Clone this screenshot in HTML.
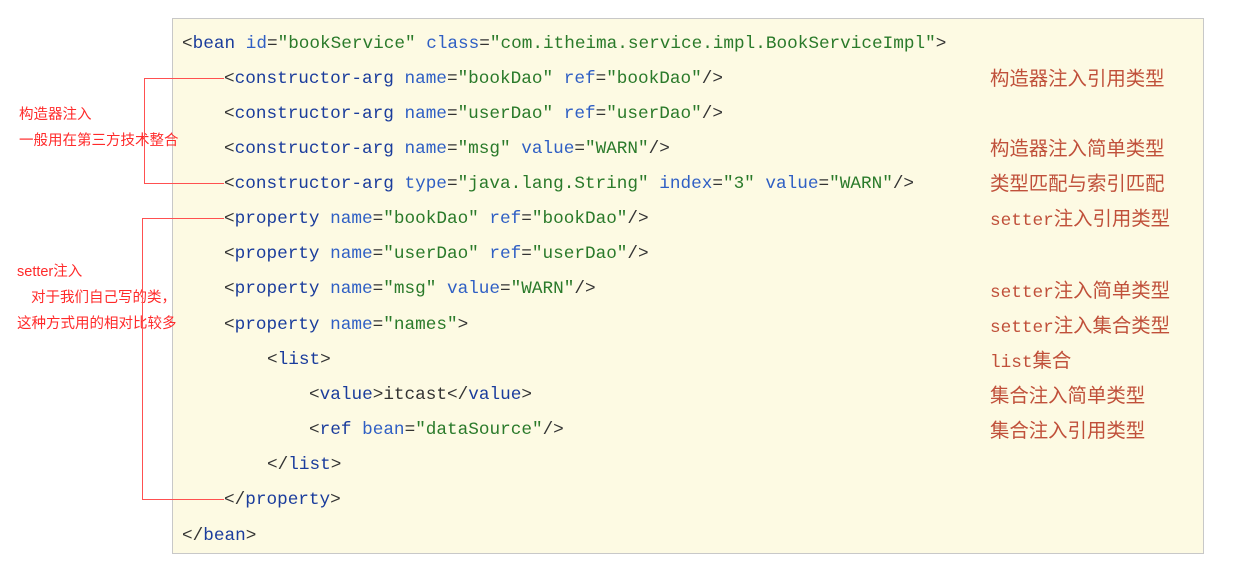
<!DOCTYPE html>
<html><head><meta charset="utf-8"><style>
body{margin:0;width:1242px;height:568px;background:#fff;position:relative;overflow:hidden;font-family:"Liberation Sans","Noto Sans CJK SC",sans-serif}
#box{position:absolute;left:172px;top:18px;width:1030px;height:534px;background:#fdfae3;border:1px solid #c8c8c8}
.c{position:absolute;font-family:"Liberation Mono",monospace;font-size:17.7px;white-space:pre;color:#333;line-height:20px}
.t{color:#1a3c9c}.a{color:#2f5fc4}.s{color:#2a7a2a}
.r{position:absolute;left:990px;font-size:19.4px;color:#c0503a;font-family:"Liberation Mono","Noto Sans CJK SC",monospace;line-height:20px;white-space:nowrap}
.r span{font-size:17.7px}
.l{position:absolute;font-size:14.5px;color:#ff2a2a;white-space:nowrap;line-height:16px}
.ln{position:absolute;background:#ff5050}
</style></head><body>
<div id="box"></div>
<div class="c" style="left:182px;top:34px">&lt;<span class="t">bean</span> <span class="a">id</span>=<span class="s">"bookService"</span> <span class="a">class</span>=<span class="s">"com.itheima.service.impl.BookServiceImpl"</span>&gt;</div>
<div class="c" style="left:224px;top:69px">&lt;<span class="t">constructor-arg</span> <span class="a">name</span>=<span class="s">"bookDao"</span> <span class="a">ref</span>=<span class="s">"bookDao"</span>/&gt;</div>
<div class="c" style="left:224px;top:104px">&lt;<span class="t">constructor-arg</span> <span class="a">name</span>=<span class="s">"userDao"</span> <span class="a">ref</span>=<span class="s">"userDao"</span>/&gt;</div>
<div class="c" style="left:224px;top:139px">&lt;<span class="t">constructor-arg</span> <span class="a">name</span>=<span class="s">"msg"</span> <span class="a">value</span>=<span class="s">"WARN"</span>/&gt;</div>
<div class="c" style="left:224px;top:174px">&lt;<span class="t">constructor-arg</span> <span class="a">type</span>=<span class="s">"java.lang.String"</span> <span class="a">index</span>=<span class="s">"3"</span> <span class="a">value</span>=<span class="s">"WARN"</span>/&gt;</div>
<div class="c" style="left:224px;top:209px">&lt;<span class="t">property</span> <span class="a">name</span>=<span class="s">"bookDao"</span> <span class="a">ref</span>=<span class="s">"bookDao"</span>/&gt;</div>
<div class="c" style="left:224px;top:244px">&lt;<span class="t">property</span> <span class="a">name</span>=<span class="s">"userDao"</span> <span class="a">ref</span>=<span class="s">"userDao"</span>/&gt;</div>
<div class="c" style="left:224px;top:279px">&lt;<span class="t">property</span> <span class="a">name</span>=<span class="s">"msg"</span> <span class="a">value</span>=<span class="s">"WARN"</span>/&gt;</div>
<div class="c" style="left:224px;top:315px">&lt;<span class="t">property</span> <span class="a">name</span>=<span class="s">"names"</span>&gt;</div>
<div class="c" style="left:267px;top:350px">&lt;<span class="t">list</span>&gt;</div>
<div class="c" style="left:309px;top:385px">&lt;<span class="t">value</span>&gt;itcast&lt;/<span class="t">value</span>&gt;</div>
<div class="c" style="left:309px;top:420px">&lt;<span class="t">ref</span> <span class="a">bean</span>=<span class="s">"dataSource"</span>/&gt;</div>
<div class="c" style="left:267px;top:455px">&lt;/<span class="t">list</span>&gt;</div>
<div class="c" style="left:224px;top:490px">&lt;/<span class="t">property</span>&gt;</div>
<div class="c" style="left:182px;top:526px">&lt;/<span class="t">bean</span>&gt;</div>

<div class="r" style="top:70px">构造器注入引用类型</div>
<div class="r" style="top:140px">构造器注入简单类型</div>
<div class="r" style="top:175px">类型匹配与索引匹配</div>
<div class="r" style="top:210px"><span>setter</span>注入引用类型</div>
<div class="r" style="top:282px"><span>setter</span>注入简单类型</div>
<div class="r" style="top:317px"><span>setter</span>注入集合类型</div>
<div class="r" style="top:352px"><span>list</span>集合</div>
<div class="r" style="top:387px">集合注入简单类型</div>
<div class="r" style="top:422px">集合注入引用类型</div>

<div class="l" style="left:19px;top:107px">构造器注入</div>
<div class="l" style="left:19px;top:133px">一般用在第三方技术整合</div>
<div class="l" style="left:17px;top:264px">setter注入</div>
<div class="l" style="left:31px;top:290px">对于我们自己写的类，</div>
<div class="l" style="left:17px;top:316px">这种方式用的相对比较多</div>

<div class="ln" style="left:144px;top:78px;width:1px;height:106px"></div>
<div class="ln" style="left:144px;top:78px;width:80px;height:1px"></div>
<div class="ln" style="left:144px;top:183px;width:80px;height:1px"></div>
<div class="ln" style="left:142px;top:218px;width:1px;height:282px"></div>
<div class="ln" style="left:142px;top:218px;width:82px;height:1px"></div>
<div class="ln" style="left:142px;top:499px;width:82px;height:1px"></div>
</body></html>
